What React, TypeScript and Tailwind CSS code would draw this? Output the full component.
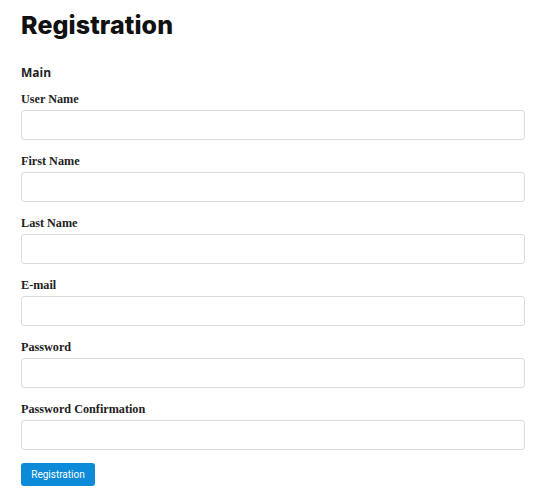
import React from "react";

const fields = [
  "User Name",
  "First Name",
  "Last Name",
  "E-mail",
  "Password",
  "Password Confirmation",
];

export default function App() {
  return (
    <div className="bg-white w-[545px] h-[501px] px-[21px] pt-[9px] text-[#111]">
      <h1 className="text-[25px] leading-[32px] font-extrabold text-[#111] [font-family:Inter,sans-serif] tracking-[0.1px]">
        Registration
      </h1>
      <div className="mt-[24px] text-[12px] leading-[16px] font-bold text-[#222] [font-family:'Open_Sans',sans-serif]">
        Main
      </div>
      <div className="mt-[11px] flex flex-col gap-[14px]">
        {fields.map((f) => (
          <div key={f} className="flex flex-col">
            <label className="text-[12.2px] leading-[15px] font-bold text-[#222] [font-family:'Liberation_Serif',serif]">
              {f}
            </label>
            <input
              type="text"
              className="mt-[3px] h-[30px] w-[504px] rounded-[3px] border border-[#dcdcdc] bg-white outline-none"
            />
          </div>
        ))}
      </div>
      <button className="mt-[13px] h-[23px] w-[74px] rounded-[3px] bg-[#0d8ad8] text-white text-[10px] [font-family:'Roboto',sans-serif]">
        Registration
      </button>
    </div>
  );
}
